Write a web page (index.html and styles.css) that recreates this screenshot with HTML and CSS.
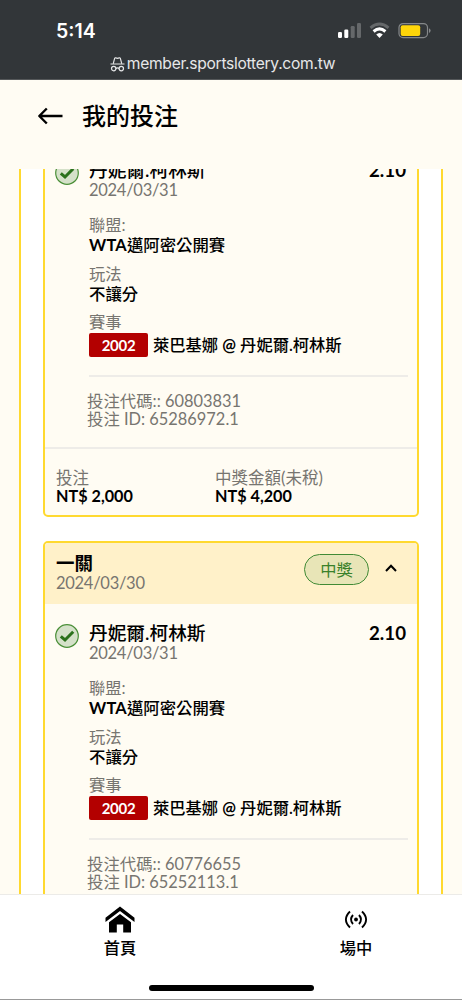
FILE: index.html
```html
<!DOCTYPE html>
<html lang="zh-Hant">
<head>
<meta charset="utf-8">
<meta name="viewport" content="width=device-width, initial-scale=1">
<title>我的投注</title>
<link rel="stylesheet" href="styles.css">
</head>
<body>
<div class="phone">
  <header class="browser">
    <div class="status">
      <span class="clock">5:14</span>
      <svg class="indicators" width="94" height="18" viewBox="0 0 94 18">
        <rect x="0" y="10" width="4" height="6" rx="1.2" fill="#fff"/>
        <rect x="6.3" y="7.5" width="4" height="8.5" rx="1.2" fill="#fff"/>
        <rect x="12.7" y="4" width="4" height="12" rx="1.2" fill="#65686a"/>
        <rect x="19" y="1" width="4" height="15" rx="1.2" fill="#65686a"/>
        <path d="M32.500 5.800Q41.500-1.600 50.500 5.800" fill="none" stroke="#65686a" stroke-width="2.900"/>
        <path d="M35.600 9.500Q41.500 4.300 47.400 9.500" fill="none" stroke="#fff" stroke-width="3"/>
        <path d="M38.200 12.600Q41.500 9.600 44.800 12.600L41.500 16Z" fill="#fff"/>
        <rect x="61" y="1.600" width="28.500" height="14" rx="4" fill="none" stroke="#85888a" stroke-width="1.200"/>
        <rect x="62.700" y="3.300" width="19.500" height="10.700" rx="2" fill="#ffd60a"/>
        <path d="M91 6.300Q92.600 7 92.600 8.600T91 11Z" fill="#85888a"/>
      </svg>
    </div>
    <div class="address">
      <svg width="15" height="15" viewBox="0 0 15 15" fill="none" stroke="#e6e7e8" stroke-width="1.200">
        <path d="M3.300 6.300L4.700 1.200Q5 .6 5.700.8L7.500 1.300 9.300.8Q10 .6 10.300 1.200L11.700 6.300M.5 7H14.500M5.800 11.500Q7.500 10.400 9.200 11.500"/>
        <circle cx="3.700" cy="11.600" r="2.200"/><circle cx="11.300" cy="11.600" r="2.200"/>
      </svg>
      <span>member.sportslottery.com.tw</span>
    </div>
  </header>

  <div class="titlebar">
    <svg width="26" height="18" viewBox="0 0 26 18" fill="none" stroke="#000" stroke-width="2.400" stroke-linejoin="round">
      <path d="M25.500 9H2.500M9.800 1.500L2.300 9l7.500 7.500"/>
    </svg>
    <h1>我的投注</h1>
  </div>

  <main class="viewport">
    <div class="panel">
      <article class="card">
        <div class="card-head"></div>
        <section class="bet">
          <svg class="check" width="24" height="24" viewBox="0 0 24 24"><circle cx="12" cy="12" r="11.300" fill="#d5e1c9" stroke="#4b8f38" stroke-width="1.200"/><path d="M5.800 12.300l4.200 3.700 8.200-8.300" fill="none" stroke="#2b711b" stroke-width="3"/></svg>
          <div class="details">
            <div class="pick"><b>丹妮爾.柯林斯</b><b class="odds">2.10</b></div>
            <div class="date">2024/03/31</div>
            <dl>
              <dt>聯盟:</dt><dd><b class="latin">WTA</b>邁阿密公開賽</dd>
              <dt>玩法</dt><dd>不讓分</dd>
              <dt>賽事</dt><dd class="match"><span class="tag">2002</span><span class="teams">萊巴基娜 <b class="at">@</b> 丹妮爾.柯林斯</span></dd>
            </dl>
            <div class="codes"><div>投注代碼:: 60803831</div><div>投注 ID: 65286972.1</div></div>
          </div>
        </section>
        <footer class="totals">
          <div><div class="label">投注</div><div class="money">NT$ 2,000</div></div>
          <div><div class="label">中獎金額(未稅)</div><div class="money">NT$ 4,200</div></div>
        </footer>
      </article>

      <article class="card">
        <div class="card-head">
          <div class="head-text"><div class="type">一關</div><div class="date">2024/03/30</div></div>
          <span class="pill">中獎</span>
          <svg class="chevron" width="12" height="8" viewBox="0 0 12 8" fill="none" stroke="#000" stroke-width="2"><path d="M1 7l5-5.300L11 7"/></svg>
        </div>
        <section class="bet">
          <svg class="check" width="24" height="24" viewBox="0 0 24 24"><circle cx="12" cy="12" r="11.300" fill="#d5e1c9" stroke="#4b8f38" stroke-width="1.200"/><path d="M5.800 12.300l4.200 3.700 8.200-8.300" fill="none" stroke="#2b711b" stroke-width="3"/></svg>
          <div class="details">
            <div class="pick"><b>丹妮爾.柯林斯</b><b class="odds">2.10</b></div>
            <div class="date">2024/03/31</div>
            <dl>
              <dt>聯盟:</dt><dd><b class="latin">WTA</b>邁阿密公開賽</dd>
              <dt>玩法</dt><dd>不讓分</dd>
              <dt>賽事</dt><dd class="match"><span class="tag">2002</span><span class="teams">萊巴基娜 <b class="at">@</b> 丹妮爾.柯林斯</span></dd>
            </dl>
            <div class="codes"><div>投注代碼:: 60776655</div><div>投注 ID: 65252113.1</div></div>
          </div>
        </section>
      </article>
    </div>
  </main>

  <nav class="tabs">
    <div class="tab-row">
      <div class="tab">
        <svg width="30" height="27" viewBox="0 0 30 27"><path d="M.5 11.800L15 .5l14.500 11.300v4.100L15 4.900.5 15.900Z"/><path d="M4 16.200L15 7.900l11 8.300V26.500h-7.800v-8h-6.400v8H4Z"/></svg>
        <span>首頁</span>
      </div>
      <div class="tab">
        <svg width="24" height="27" viewBox="0 0 24 27" fill="none" stroke="#000" stroke-width="1.900"><circle cx="12" cy="13.500" r="1.900" fill="#000" stroke="none"/><path d="M9 9Q5 13.500 9 18M15 9Q19 13.500 15 18M6 5.500Q-2.200 13.500 6 21.500M18 5.500Q26.200 13.500 18 21.500"/></svg>
        <span>場中</span>
      </div>
    </div>
    <div class="home-bar"></div>
  </nav>
</div>
</body>
</html>
```
FILE: styles.css
```css
* { box-sizing: border-box; }
body { margin: 0; font-family: Lato, "Noto Sans CJK TC", sans-serif; color: #000; }
.phone { width: 462px; height: 1000px; display: flex; flex-direction: column; overflow: hidden; background: #fffcf3; }
.browser { height: 80px; flex: none; background: #323639; border-bottom: 1px solid #55585a; color: #fff; font-family: Inter, sans-serif; }
.status { height: 54px; padding: 22px 30px 0 56px; display: flex; justify-content: space-between; align-items: flex-start; }
.clock { font-size: 19.500px; font-weight: 600; line-height: 19px; }
.address { display: flex; justify-content: center; align-items: center; height: 20px; padding-right: 17px; gap: 2px; font-size: 15.600px; letter-spacing: -.28px; line-height: 20px; color: #e6e7e8; }
.titlebar { height: 89px; flex: none; padding: 22px 37px; display: flex; align-items: flex-start; gap: 19px; }
.titlebar svg { margin-top: 5px; }
h1 { margin: 0; font-size: 24px; line-height: 28px; font-weight: 500; }
.viewport { flex: 1; min-height: 0; overflow: hidden; display: flex; flex-direction: column; justify-content: flex-start; }
.panel { flex: none; margin: -91px 19px 0; padding: 0 22px; border: solid #ffd92f; border-width: 0 2px; background: #fff; display: flex; flex-direction: column; gap: 24px; }
.card { height: 439px; flex: none; border: 2px solid #ffd92f; border-radius: 5px; background: #fffcf3; overflow: hidden; }
.card-head { height: 61px; background: #fff1c9; padding: 10px 20px 0 11px; display: flex; align-items: flex-start; }
.head-text { flex: 1; }
.type { font-size: 18.500px; line-height: 20px; font-weight: 700; }
.date { font-size: 16.500px; letter-spacing: -.28px; line-height: 20px; color: #777570; }
.pill { width: 65px; height: 31px; margin-top: 1px; border: 1px solid #408a35; border-radius: 16px; background: #e8e5b7; color: #39812a; font-size: 16.300px; line-height: 30px; text-align: center; }
.chevron { margin: 11px 0 0 16px; }
.bet { height: 308px; padding: 19px 9px 0 10px; display: flex; gap: 10px; border-bottom: 2px solid #eeece8; }
.check { flex: none; margin-top: 1px; }
.details { flex: 1; }
.pick { display: flex; justify-content: space-between; font-size: 18.700px; line-height: 20px; }
.pick b { font-weight: 500; }
.pick .odds { font-weight: 700; margin-right: 2px; }
dl { margin: 16px 0 0; padding-bottom: 18px; border-bottom: 2px solid #eeece8; }
dt { font-size: 16.300px; line-height: 18px; color: #777570; }
dd { margin: 0 0 8.500px; font-size: 16.400px; line-height: 22px; font-weight: 500; }
.latin { font-weight: 700; letter-spacing: .2px; }
.match { margin: 2px 0 0; height: 24px; display: flex; gap: 5px; font-size: 16.300px; line-height: 24px; }
.at { font-weight: 700; }
.tag { width: 59px; border-radius: 2px; background: #b30000; color: #fff; text-align: center; font-size: 15px; font-weight: 700; letter-spacing: -.3px; }
.codes { margin: 15px 0 0 -2px; font-size: 16.400px; line-height: 18px; color: #777570; }
.totals { padding: 21px 11px 0; display: grid; grid-template-columns: 159px 1fr; font-size: 16.200px; line-height: 18px; }
.label { color: #777570; font-size: 16.500px; line-height: 17px; }
.money { font-weight: 700; }
.tabs { height: 106px; flex: none; background: #fff; border-top: 1px solid #ecebe8; border-bottom: 1px solid #999; }
.tab-row { display: grid; grid-template-columns: 236px 236px; padding-left: 2px; width: 474px; height: 90px; }
.tab { padding-top: 11px; display: flex; flex-direction: column; align-items: center; font-size: 16.300px; line-height: 20px; font-weight: 500; gap: 5px; }
.home-bar { width: 165px; height: 6px; border-radius: 3px; background: #000; margin: 0 auto; }
```
